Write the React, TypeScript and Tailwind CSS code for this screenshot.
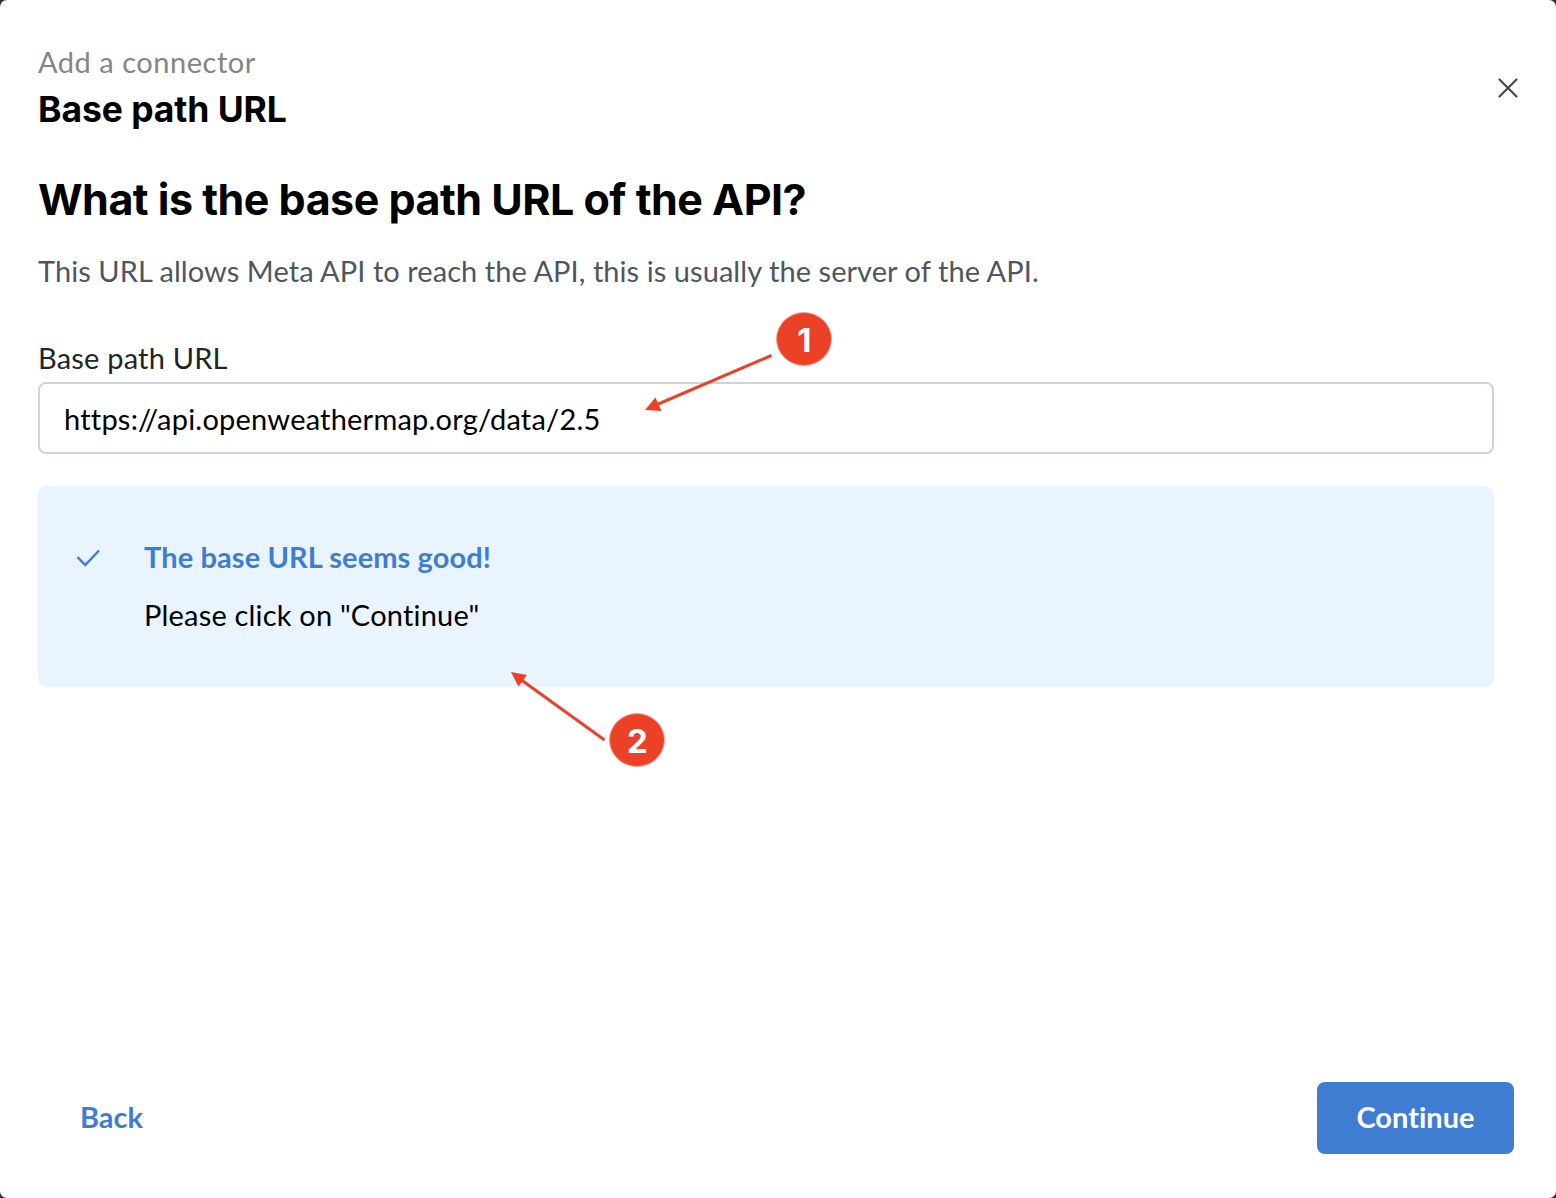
import { ReactNode } from "react";

function Arrow({ className, width, height, line, head }: { className: string; width: number; height: number; line: string; head: string }) {
  return (
    <svg className={className} width={width} height={height} fill="none">
      <path d={line} stroke="#eb4127" strokeWidth="3" />
      <path d={head} fill="#eb4127" />
    </svg>
  );
}

function Marker({ className, children }: { className: string; children: ReactNode }) {
  return (
    <span className={`absolute flex h-[54px] w-14 items-center justify-center rounded-[50%] border border-[#f3a598] bg-[#eb4127] pt-[3px] font-['Inter'] text-[33px] leading-none font-bold text-white ${className}`}>
      {children}
    </span>
  );
}

export default function App() {
  return (
    <div className="h-[1198px] w-[1556px] bg-[#333]">
      <main className="relative flex h-full flex-col rounded-[7px] bg-white font-['Lato',sans-serif] text-[29px] leading-10 whitespace-nowrap text-black [font-variant-ligatures:none]">
        <header className="flex items-start justify-between pt-[42px] pr-9 pl-[38px]">
          <div>
            <p className="tracking-[0.53px] text-[#858585]">Add a connector</p>
            <h1 className="mt-1.5 font-['Inter'] text-[35.5px] leading-[44px] font-bold tracking-[-0.08px]">Base path URL</h1>
          </div>
          <button aria-label="Close" className="mt-[34px]">
            <svg width="24" height="24" fill="none" stroke="#454952" strokeWidth="2.2" strokeLinecap="round">
              <path d="M3.5 3.5 20.5 20.5M20.5 3.5 3.5 20.5" />
            </svg>
          </button>
        </header>

        <section className="pr-[62px] pl-[38px]">
          <h2 className="mt-[40px] font-['Inter'] text-[43px] leading-[54px] font-bold tracking-[-0.5px]">What is the base path URL of the API?</h2>
          <p className="mt-[25px] tracking-[0.06px] text-[#50565e]">This URL allows Meta API to reach the API, this is usually the server of the API.</p>
          <label className="mt-[47px] block tracking-[0.2px] text-[#212529]">Base path URL</label>
          <div className="mt-1 flex h-[72px] items-center rounded-lg border-2 border-[#ced4da] pt-0.5 pl-6 tracking-[0.21px]">https://api.openweathermap.org/data/2.5</div>

          <div className="mt-8 flex h-[201px] rounded-lg bg-[#e9f4fe] pt-[51px] pl-[38px]">
            <svg className="mt-[10px] mr-[43px]" width="25" height="20" fill="none" stroke="#3f7dd3" strokeWidth="2.4">
              <path d="M1.5 10.2 9.3 18 23 3.5" />
            </svg>
            <div>
              <p className="font-bold tracking-[0.1px] text-[#3f7dd3]">The base URL seems good!</p>
              <p className="mt-[18px] tracking-[0.19px]">Please click on "Continue"</p>
            </div>
          </div>
        </section>

        <footer className="mt-auto mb-11 flex h-[72px] items-center justify-between pr-[42px] pl-20">
          <button className="pb-0.5 font-bold text-[#3f7dd3]">Back</button>
          <button className="h-[72px] w-[197px] rounded-lg bg-[#3f7dd3] pb-0.5 font-bold text-white">Continue</button>
        </footer>

        <Arrow className="absolute top-[350px] left-[640px]" width={140} height={66} line="M131.5 5.5 16 55" head="M5 60 15.5 47.5 21.5 61Z" />
        <Marker className="top-[311.5px] left-[776.4px]">1</Marker>
        <Arrow className="absolute top-[668px] left-[506px]" width={105} height={80} line="M98.5 72 14 11" head="M5 4 21 7 12.5 18.5Z" />
        <Marker className="top-[712.5px] left-[609.4px]">2</Marker>
      </main>
    </div>
  );
}
